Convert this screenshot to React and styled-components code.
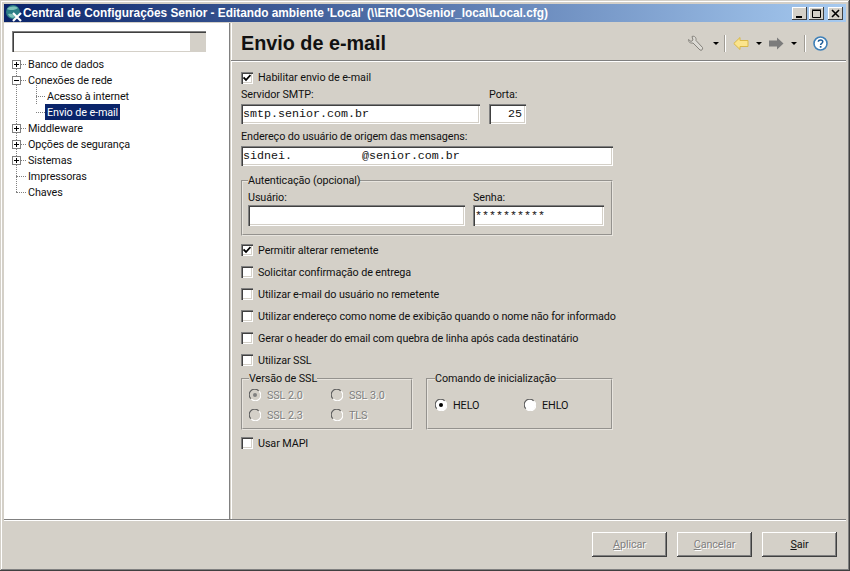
import React from "react";
import styled, { createGlobalStyle } from "styled-components";

const GlobalStyle = createGlobalStyle`
  html, body {
    margin: 0;
    padding: 0;
    background: #d4d0c8;
  }
  * {
    box-sizing: border-box;
  }
`;

const Window = styled.div`
  width: 850px;
  height: 571px;
  display: flex;
  flex-direction: column;
  padding: 4px;
  background: #d4d0c8;
  box-shadow: inset -1px -1px 0 #404040, inset 1px 1px 0 #d4d0c8,
    inset -2px -2px 0 #808080, inset 2px 2px 0 #ffffff;
  font-family: Roboto, "Liberation Sans", Arial, sans-serif;
  font-size: 10.8px;
  letter-spacing: -0.1px;
  color: #111;
  overflow: hidden;
`;

const TitleBar = styled.div`
  height: 18px;
  flex: none;
  display: flex;
  align-items: center;
  gap: 2px;
  padding: 0 3px 0 1px;
  background: linear-gradient(90deg, #0a246a 0%, #a6caf0 100%);
`;

const TitleText = styled.div`
  flex: 1;
  margin-left: -2px;
  color: #fff;
  font-family: "Liberation Sans", Arial, sans-serif;
  font-weight: bold;
  font-size: 11.85px;
  letter-spacing: 0;
  white-space: nowrap;
`;

const WinButton = styled.div`
  width: 15px;
  height: 13px;
  margin-left: ${(p) => p.$gap || 0}px;
  display: flex;
  align-items: center;
  justify-content: center;
  background: #d4d0c8;
  box-shadow: inset -1px -1px 0 #404040, inset 1px 1px 0 #fff;
`;

const Body = styled.div`
  flex: 1;
  min-height: 0;
  display: flex;
  margin-top: 1px;
`;

const Sidebar = styled.div`
  width: 226px;
  flex: none;
  background: #fff;
  padding: 8px 0 0 8px;
  border-right: 1px solid #808080;
`;

const SearchBox = styled.div`
  width: 194px;
  height: 21px;
  display: flex;
  justify-content: flex-end;
  background: #fff;
  box-shadow: inset 1px 1px 0 #808080, inset 2px 2px 0 #404040,
    inset -1px -1px 0 #d4d0c8;
  padding: 2px 0 1px 0;
  margin-bottom: 4px;
`;

const SearchGrip = styled.div`
  width: 16px;
  background: #d4d0c8;
`;

const TreeRow = styled.div`
  position: relative;
  height: 16px;
  display: flex;
  align-items: center;
  padding-left: ${(p) => (p.$child ? 33 : 14)}px;
  white-space: nowrap;

  &::before {
    content: "";
    position: absolute;
    left: ${(p) => (p.$child ? 24 : 4)}px;
    top: 8px;
    width: ${(p) => (p.$child ? 9 : 10)}px;
    border-top: 1px dotted #808080;
  }
`;

const TreeLine = styled.span`
  position: absolute;
  left: ${(p) => p.$left}px;
  top: ${(p) => p.$top}px;
  height: ${(p) => p.$height}px;
  border-left: 1px dotted #808080;
`;

const Expander = styled.span`
  position: absolute;
  left: 0;
  top: 4px;
  width: 9px;
  height: 9px;
  border: 1px solid #808080;
  background: #fff;

  &::before {
    content: "";
    position: absolute;
    left: 1px;
    top: 3px;
    width: 5px;
    height: 1px;
    background: #000;
  }

  &::after {
    content: "";
    display: ${(p) => (p.$open ? "none" : "block")};
    position: absolute;
    left: 3px;
    top: 1px;
    width: 1px;
    height: 5px;
    background: #000;
  }
`;

const TreeLabel = styled.span`
  padding: 0 2px;
  height: 16px;
  line-height: 17px;
  background: ${(p) => (p.$selected ? "#0a246a" : "transparent")};
  color: ${(p) => (p.$selected ? "#fff" : "inherit")};
`;

const Main = styled.div`
  flex: 1;
  min-width: 0;
  display: flex;
  flex-direction: column;
  margin-left: 1px;
  box-shadow: inset 1px 0 0 #fff;
`;

const Header = styled.div`
  height: 38px;
  flex: none;
  display: flex;
  align-items: center;
  justify-content: space-between;
  padding: 3px 18px 0 10px;
  border-bottom: 1px solid #808080;
  box-shadow: 0 1px 0 #fff;
`;

const Heading = styled.h1`
  margin: 0;
  font-family: "Liberation Sans", Arial, sans-serif;
  font-size: 19.8px;
  font-weight: bold;
  letter-spacing: 0;
  color: #111;
`;

const Toolbar = styled.div`
  display: flex;
  align-items: center;
`;

const ToolDivider = styled.div`
  width: 2px;
  height: 17px;
  margin: 0 ${(p) => p.$right}px 0 ${(p) => p.$left}px;
  border-left: 1px solid #a09c94;
  border-right: 1px solid #fff;
`;

const Caret = styled.span`
  width: 0;
  height: 0;
  margin: 0 ${(p) => p.$right || 0}px 0 ${(p) => p.$left}px;
  border-left: 3px solid transparent;
  border-right: 3px solid transparent;
  border-top: 3px solid ${(p) => (p.$dim ? "#8a8a8a" : "#000")};
`;

const Form = styled.div`
  flex: 1;
  min-height: 0;
  display: flex;
  flex-direction: column;
  align-items: flex-start;
  padding: 10px 0 0 10px;
`;

const CheckRow = styled.label`
  height: ${(p) => p.$height || 22}px;
  margin-top: ${(p) => p.$top || 0}px;
  display: flex;
  align-items: center;
  gap: 5px;
  white-space: nowrap;
`;

const Box = styled.span`
  width: 12px;
  height: 12px;
  flex: none;
  display: flex;
  align-items: center;
  justify-content: center;
  background: #fff;
  box-shadow: inset 1px 1px 0 #808080, inset 2px 2px 0 #404040,
    inset -1px -1px 0 #fff, inset -2px -2px 0 #d4d0c8;
`;

const FieldRow = styled.div`
  display: flex;
  gap: ${(p) => p.$gap || 9}px;
  margin-top: ${(p) => p.$top || 0}px;
`;

const Field = styled.div`
  display: flex;
  flex-direction: column;
  width: ${(p) => p.$width}px;
`;

const FieldLabel = styled.div`
  height: 13px;
  line-height: 13px;
  margin-bottom: ${(p) => p.$below ?? 3}px;
  white-space: nowrap;
`;

const TextBox = styled.div`
  height: ${(p) => p.$height || 20}px;
  display: flex;
  align-items: center;
  justify-content: ${(p) => (p.$right ? "flex-end" : "flex-start")};
  padding: 0 4px 0 2px;
  background: #fff;
  font-family: "Liberation Mono", "Courier New", monospace;
  font-size: 11.67px;
  letter-spacing: 0;
  white-space: pre;
  color: #111;
  box-shadow: inset 1px 1px 0 #808080, inset 2px 2px 0 #404040,
    inset -1px -1px 0 #fff, inset -2px -2px 0 #d4d0c8;
`;

const Group = styled.fieldset`
  margin: ${(p) => p.$top || 0}px 0 0 0;
  padding: ${(p) => p.$padding};
  width: ${(p) => p.$width}px;
  height: ${(p) => p.$height}px;
  border: 2px groove #e8e5df;
  min-width: 0;
`;

const GroupLegend = styled.legend`
  margin-left: ${(p) => p.$indent || 0}px;
  padding: 0;
  line-height: 13px;
  white-space: nowrap;
`;

const GroupRow = styled.div`
  display: flex;
  gap: ${(p) => p.$gap}px;
  margin-top: ${(p) => p.$top || 0}px;
`;

const RadioGrid = styled.div`
  display: grid;
  grid-template-columns: ${(p) => p.$columns};
  grid-auto-rows: 20px;
  align-items: center;
`;

const RadioItem = styled.div`
  display: flex;
  align-items: center;
  gap: 6px;
  color: ${(p) => (p.$disabled ? "#808080" : "#111")};
  text-shadow: ${(p) => (p.$disabled ? "1px 1px 0 #fff" : "none")};
`;

const RadioSvg = styled.svg`
  flex: none;
`;

const Footer = styled.div`
  height: 48px;
  flex: none;
  display: flex;
  justify-content: flex-end;
  align-items: flex-start;
  gap: 10px;
  padding: 12px 9px 0 0;
  border-top: 1px solid #808080;
  box-shadow: inset 0 1px 0 #fff;
`;

const Button = styled.button`
  width: 75px;
  height: 25px;
  padding: 0;
  border: none;
  background: #d4d0c8;
  font: inherit;
  letter-spacing: inherit;
  color: ${(p) => (p.disabled ? "#808080" : "#111")};
  text-shadow: ${(p) => (p.disabled ? "1px 1px 0 #fff" : "none")};
  box-shadow: inset -1px -1px 0 #404040, inset 1px 1px 0 #fff,
    inset -2px -2px 0 #808080;
`;

const Key = styled.span`
  text-decoration: underline;
`;

function AppIcon() {
  return (
    <svg width="18" height="18" viewBox="0 0 18 18">
      <circle cx="8" cy="8" r="7" fill="#2c7f86" />
      <path d="M2 5c3-3 8-3 11-1-2 2-8 3-11 1zM3 10c3-1 6 0 7 3-3 2-6 0-7-3z" fill="#7fc2b8" />
      <path d="M8 9l8 8M16 9l-8 8" stroke="#fff" strokeWidth="2.2" />
    </svg>
  );
}

function Check() {
  return (
    <svg width="8" height="8" viewBox="0 0 8 8">
      <path d="M0.5 3.5L3 6L7.5 1" fill="none" stroke="#000" strokeWidth="1.8" />
    </svg>
  );
}

function Radio({ checked, disabled }) {
  return (
    <RadioSvg width="12" height="12" viewBox="0 0 12 12">
      <circle cx="6" cy="6" r="5.5" fill={disabled ? "#d4d0c8" : "#fff"} />
      <path d="M1.8 9.6A5.5 5.5 0 0 1 9.6 1.8" fill="none" stroke="#606060" strokeWidth="1.2" />
      <path d="M10.2 2.4A5.5 5.5 0 0 1 2.4 10.2" fill="none" stroke="#fff" strokeWidth="1.2" />
      {checked && <circle cx="6" cy="6" r="2" fill={disabled ? "#808080" : "#000"} />}
    </RadioSvg>
  );
}

function WrenchIcon() {
  return (
    <svg width="17" height="17" viewBox="0 0 17 17">
      <path
        d="M1.5 4.5L4 6.5L6 5L5 1.5C7.5 0.5 9.5 2.5 9 5.5L15.5 12.5C16 14.5 14.5 16 13 15L6 8C3.5 8.5 1 7 1.5 4.5Z"
        fill="#dcdad4"
        stroke="#85827c"
        strokeWidth="1"
      />
    </svg>
  );
}

function BackIcon() {
  return (
    <svg width="16" height="13" viewBox="0 0 16 13">
      <path d="M7 0.5L0.8 6.5L7 12.5V9.5H15V3.5H7Z" fill="#fbe48c" stroke="#d8b848" strokeWidth="1" />
    </svg>
  );
}

function ForwardIcon() {
  return (
    <svg width="16" height="13" viewBox="0 0 16 13">
      <path d="M9 0.5L15.5 6.5L9 12.5V9.5H1V3.5H9Z" fill="#7b7b7b" />
    </svg>
  );
}

function HelpIcon() {
  return (
    <svg width="15" height="15" viewBox="0 0 15 15">
      <circle cx="7.5" cy="7.5" r="6.5" fill="#fff" stroke="#3f80b8" strokeWidth="1.6" />
      <path d="M5.3 5.8C5.5 3.4 9.8 3.4 9.8 5.8C9.8 7.4 7.6 7.2 7.6 9" fill="none" stroke="#1c5c98" strokeWidth="1.5" />
      <rect x="6.8" y="10" width="1.7" height="1.7" fill="#1c5c98" />
    </svg>
  );
}

const tree = [
  { label: "Banco de dados", expander: "closed", line: { left: 4, top: 8, height: 128 } },
  { label: "Conexões de rede", expander: "open" },
  { label: "Acesso à internet", child: true, line: { left: 24, top: -8, height: 24 } },
  { label: "Envio de e-mail", child: true, selected: true },
  { label: "Middleware", expander: "closed" },
  { label: "Opções de segurança", expander: "closed" },
  { label: "Sistemas", expander: "closed" },
  { label: "Impressoras" },
  { label: "Chaves" },
];

const options = [
  "Solicitar confirmação de entrega",
  "Utilizar e-mail do usuário no remetente",
  "Utilizar endereço como nome de exibição quando o nome não for informado",
  "Gerar o header do email com quebra de linha após cada destinatário",
  "Utilizar SSL",
];

export default function App() {
  return (
    <Window>
      <GlobalStyle />
      <TitleBar>
        <AppIcon />
        <TitleText>
          Central de Configurações Senior - Editando ambiente 'Local' (\\ERICO\Senior_local\Local.cfg)
        </TitleText>
        <WinButton>
          <svg width="9" height="9" viewBox="0 0 9 9">
            <rect x="1" y="7" width="6" height="2" fill="#000" />
          </svg>
        </WinButton>
        <WinButton>
          <svg width="9" height="9" viewBox="0 0 9 9">
            <path d="M0.5 1.5H8.5V8.5H0.5Z M0 1H9" fill="none" stroke="#000" />
          </svg>
        </WinButton>
        <WinButton $gap={2}>
          <svg width="9" height="9" viewBox="0 0 9 9">
            <path d="M1 1L8 8M8 1L1 8" stroke="#000" strokeWidth="1.6" />
          </svg>
        </WinButton>
      </TitleBar>
      <Body>
        <Sidebar>
          <SearchBox>
            <SearchGrip />
          </SearchBox>
          {tree.map((item) => (
            <TreeRow key={item.label} $child={item.child}>
              {item.line && (
                <TreeLine $left={item.line.left} $top={item.line.top} $height={item.line.height} />
              )}
              {item.expander && <Expander $open={item.expander === "open"} />}
              <TreeLabel $selected={item.selected}>{item.label}</TreeLabel>
            </TreeRow>
          ))}
        </Sidebar>
        <Main>
          <Header>
            <Heading>Envio de e-mail</Heading>
            <Toolbar>
              <WrenchIcon />
              <Caret $left={9} />
              <ToolDivider $left={5} $right={7} />
              <BackIcon />
              <Caret $left={7} $right={6} />
              <ForwardIcon />
              <Caret $left={7} />
              <ToolDivider $left={7} $right={7} />
              <HelpIcon />
            </Toolbar>
          </Header>
          <Form>
            <CheckRow $height={13}>
              <Box>
                <Check />
              </Box>
              Habilitar envio de e-mail
            </CheckRow>
            <FieldRow $top={4}>
              <Field $width={239}>
                <FieldLabel>Servidor SMTP:</FieldLabel>
                <TextBox>smtp.senior.com.br</TextBox>
              </Field>
              <Field $width={37}>
                <FieldLabel>Porta:</FieldLabel>
                <TextBox $right>25</TextBox>
              </Field>
            </FieldRow>
            <FieldRow $top={6}>
              <Field $width={372}>
                <FieldLabel>Endereço do usuário de origem das mensagens:</FieldLabel>
                <TextBox>{"sidnei.          @senior.com.br"}</TextBox>
              </Field>
            </FieldRow>
            <Group $top={8} $width={372} $height={62} $padding="4px 7px 0 5px">
              <GroupLegend>Autenticação (opcional)</GroupLegend>
              <FieldRow $gap={8}>
                <Field $width={217}>
                  <FieldLabel $below={1}>Usuário:</FieldLabel>
                  <TextBox $height={21} />
                </Field>
                <Field $width={131}>
                  <FieldLabel $below={1}>Senha:</FieldLabel>
                  <TextBox $height={21}>**********</TextBox>
                </Field>
              </FieldRow>
            </Group>
            <CheckRow $top={3}>
              <Box>
                <Check />
              </Box>
              Permitir alterar remetente
            </CheckRow>
            {options.map((text) => (
              <CheckRow key={text}>
                <Box />
                {text}
              </CheckRow>
            ))}
            <GroupRow $gap={13} $top={1}>
              <Group $width={172} $height={58} $padding="0 0 0 6px">
                <GroupLegend>Versão de SSL</GroupLegend>
                <RadioGrid $columns="82px 70px">
                  <RadioItem $disabled>
                    <Radio checked disabled />
                    SSL 2.0
                  </RadioItem>
                  <RadioItem $disabled>
                    <Radio disabled />
                    SSL 3.0
                  </RadioItem>
                  <RadioItem $disabled>
                    <Radio disabled />
                    SSL 2.3
                  </RadioItem>
                  <RadioItem $disabled>
                    <Radio disabled />
                    TLS
                  </RadioItem>
                </RadioGrid>
              </Group>
              <Group $width={187} $height={58} $padding="10px 0 0 7px">
                <GroupLegend>Comando de inicialização</GroupLegend>
                <RadioGrid $columns="89px 80px">
                  <RadioItem>
                    <Radio checked />
                    HELO
                  </RadioItem>
                  <RadioItem>
                    <Radio />
                    EHLO
                  </RadioItem>
                </RadioGrid>
              </Group>
            </GroupRow>
            <CheckRow $top={2}>
              <Box />
              Usar MAPI
            </CheckRow>
          </Form>
        </Main>
      </Body>
      <Footer>
        <Button disabled>
          <Key>A</Key>plicar
        </Button>
        <Button disabled>
          <Key>C</Key>ancelar
        </Button>
        <Button>
          <Key>S</Key>air
        </Button>
      </Footer>
    </Window>
  );
}
